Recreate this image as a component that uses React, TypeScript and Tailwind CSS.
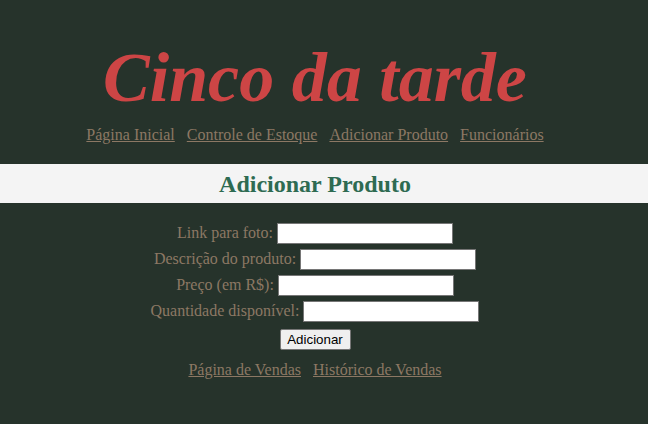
import React from "react";

const navLinks = ["Página Inicial", "Controle de Estoque", "Adicionar Produto", "Funcionários"];
const footerLinks = ["Página de Vendas", "Histórico de Vendas"];

const campos = [
    { label: "Link para foto:" },
    { label: "Descrição do produto:" },
    { label: "Preço (em R$):" },
    { label: "Quantidade disponível:" },
];

export default function App() {
    return (
        <div className="w-[648px] h-[424px] bg-[#26332b] font-['Liberation_Serif',serif] overflow-hidden">
            <div className="pr-[18px] flex flex-col items-center">
                <h1 className="mt-[38px] text-[70px] leading-[80px] font-bold italic text-[#cd4545]">
                    Cinco da tarde
                </h1>
                <nav className="mt-[8px] flex gap-[12px] text-[16px] leading-[18px]">
                    {navLinks.map((item, index) => (
                        <a key={index} href="#" className="underline text-[#8c7864]">{item}</a>
                    ))}
                </nav>
            </div>
            <div className="mt-[20px] h-[39px] bg-[#f4f4f4] pr-[18px] flex items-center justify-center">
                <h2 className="text-[24px] font-bold text-[#2e6b52]">Adicionar Produto</h2>
            </div>
            <form className="pr-[18px] pt-[17px] flex flex-col items-center text-[16px] text-[#8c7864]">
                {campos.map((campo, index) => (
                    <div key={index} className="h-[26px] flex items-center gap-[4px]">
                        <label>{campo.label}</label>
                        <input type="text" className="w-[176px] h-[21px] bg-white border border-[#767676]" />
                    </div>
                ))}
                <button
                    type="button"
                    className="mt-[5px] w-[71px] h-[21px] bg-[#efefef] border border-[#767676] rounded-[2px] text-black text-[13.33px] leading-[16px] font-['Liberation_Sans',sans-serif]"
                >
                    Adicionar
                </button>
                <div className="mt-[8px] flex gap-[12px]">
                    {footerLinks.map((item, index) => (
                        <a key={index} href="#" className="underline text-[#8c7864]">{item}</a>
                    ))}
                </div>
            </form>
        </div>
    );
}
